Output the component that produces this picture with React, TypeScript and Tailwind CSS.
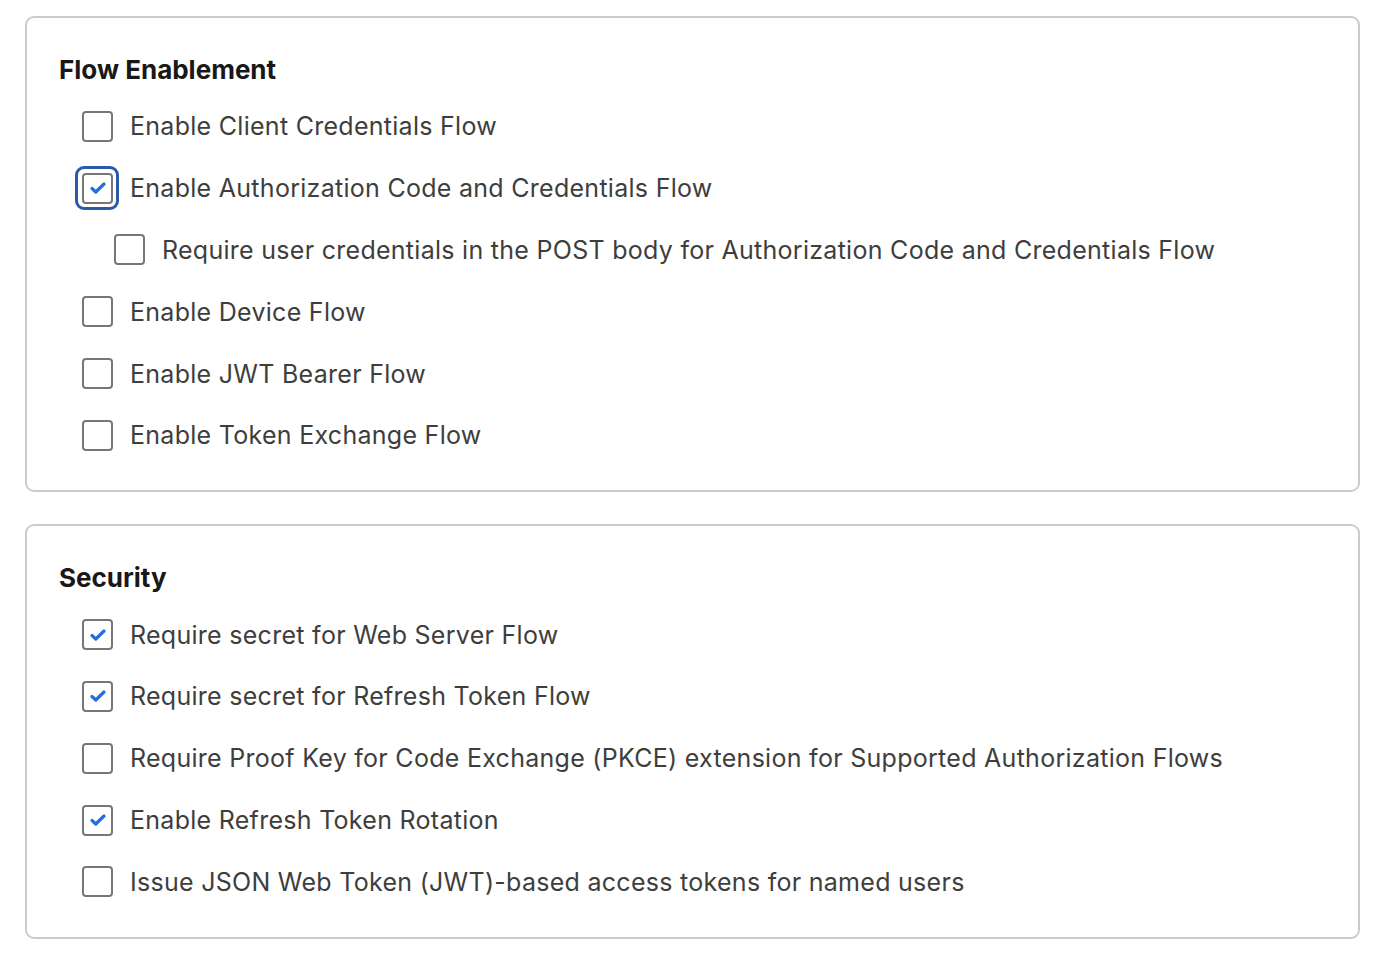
import React from "react";

type Item = {
  label: string;
  checked?: boolean;
  focused?: boolean;
  nested?: boolean;
};

const flowItems: Item[] = [
  { label: "Enable Client Credentials Flow" },
  { label: "Enable Authorization Code and Credentials Flow", checked: true, focused: true },
  {
    label: "Require user credentials in the POST body for Authorization Code and Credentials Flow",
    nested: true,
  },
  { label: "Enable Device Flow" },
  { label: "Enable JWT Bearer Flow" },
  { label: "Enable Token Exchange Flow" },
];

const securityItems: Item[] = [
  { label: "Require secret for Web Server Flow", checked: true },
  { label: "Require secret for Refresh Token Flow", checked: true },
  { label: "Require Proof Key for Code Exchange (PKCE) extension for Supported Authorization Flows" },
  { label: "Enable Refresh Token Rotation", checked: true },
  { label: "Issue JSON Web Token (JWT)-based access tokens for named users" },
];

function Checkbox({ checked, focused }: { checked?: boolean; focused?: boolean }) {
  return (
    <span className="relative shrink-0 w-[31px] h-[31px] rounded-[4px] border-2 border-[#777777] bg-white flex items-center justify-center">
      {focused && (
        <span className="absolute -left-[9px] -top-[9px] -right-[8px] -bottom-[8px] rounded-[9px] border-[3px] border-[#2b5aa7]" />
      )}
      {checked && (
        <svg width="18" height="14" viewBox="0 0 18 14" fill="none">
          <path
            d="M3 7.5 L6.8 11 L15 3"
            stroke="#1f6fdc"
            strokeWidth="3.2"
            strokeLinecap="round"
            strokeLinejoin="round"
          />
        </svg>
      )}
    </span>
  );
}

function Section({ title, items }: { title: string; items: Item[] }) {
  return (
    <section className="border-2 border-[#cbcbcb] rounded-[9px] bg-white pt-[36px] pb-[24px] pl-[32px] pr-8">
      <h2 className="text-[26px] leading-[32px] font-bold text-[#181818]">{title}</h2>
      <ul className="mt-[9.5px]">
        {items.map((item) => (
          <li
            key={item.label}
            className={`h-[61.8px] flex items-center gap-[17px] ${item.nested ? "pl-[55px]" : "pl-[23px]"}`}
          >
            <Checkbox checked={item.checked} focused={item.focused} />
            <span className="text-[25px] leading-[32px] tracking-[0.28px] text-[#3e3e3c]">
              {item.label}
            </span>
          </li>
        ))}
      </ul>
    </section>
  );
}

export default function App() {
  return (
    <div
      className="min-h-[966px] bg-white pt-[16px] pl-[25px] pr-[20px] flex flex-col gap-[32px]"
      style={{ fontFamily: "Inter, 'Noto Sans', sans-serif" }}
    >
      <Section title="Flow Enablement" items={flowItems} />
      <Section title="Security" items={securityItems} />
    </div>
  );
}
